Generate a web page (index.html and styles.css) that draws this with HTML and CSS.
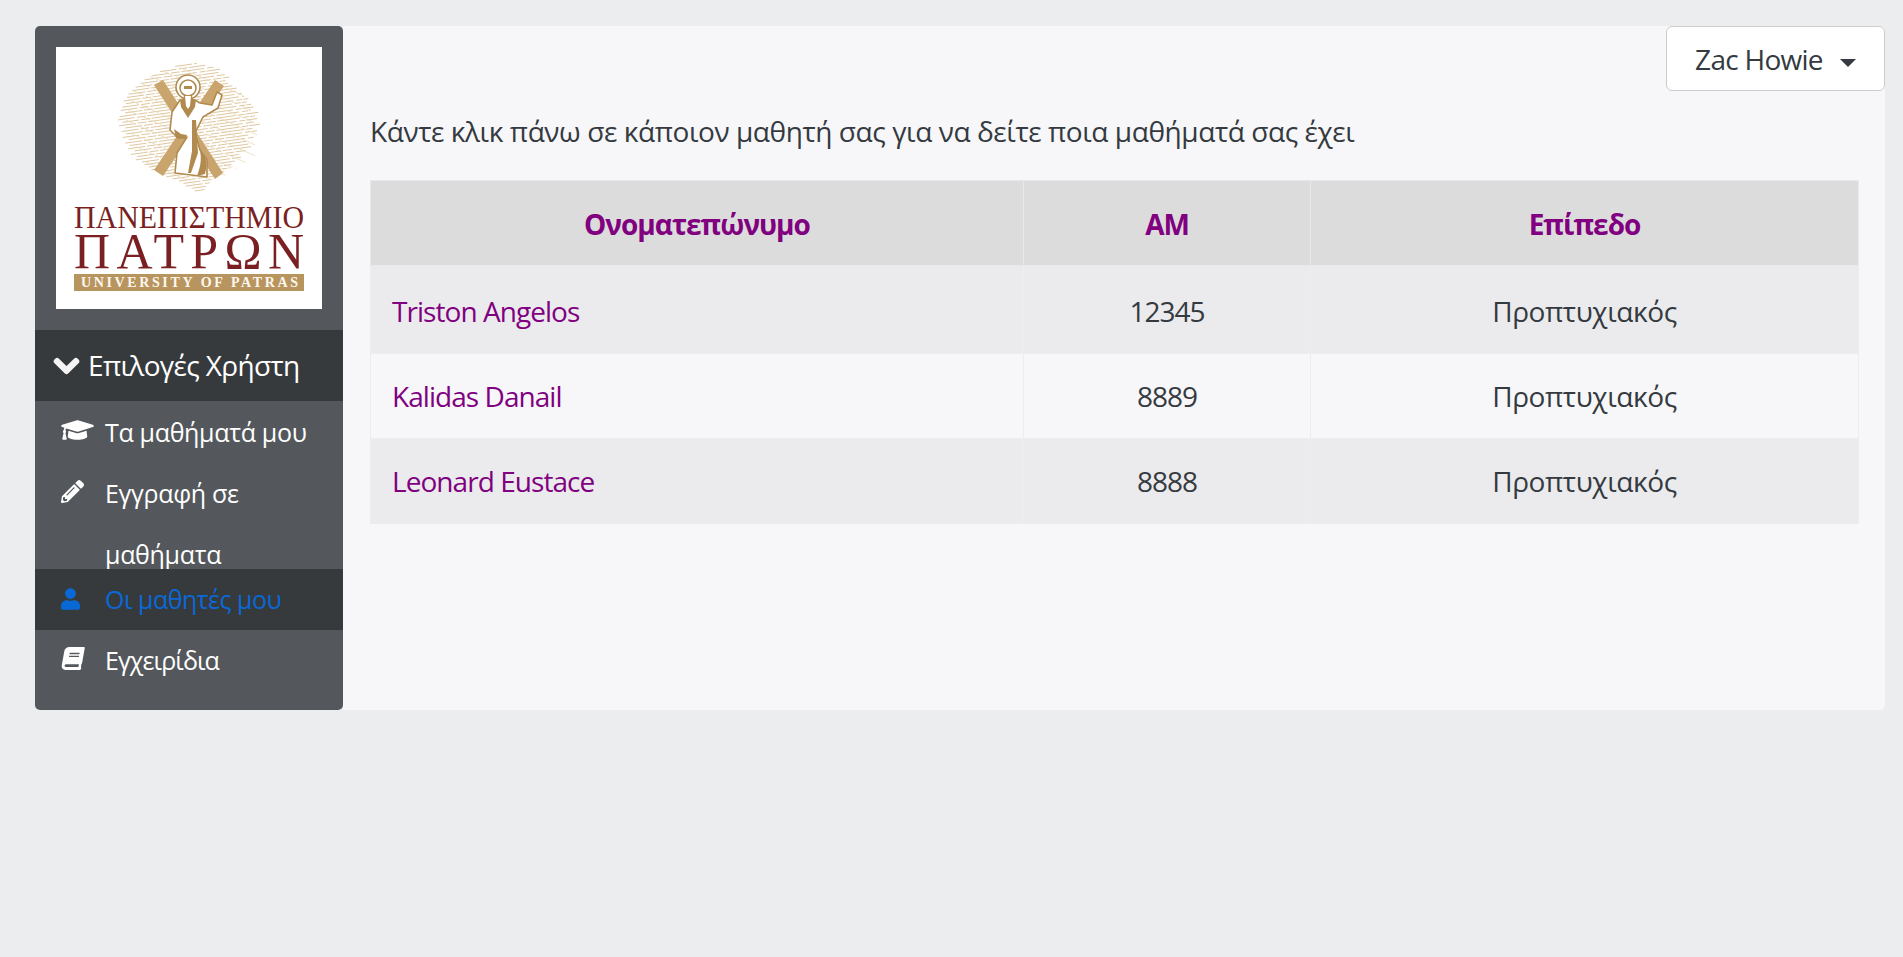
FILE: index.html
```html
<!DOCTYPE html>
<html lang="el">
  <head>
    <meta charset="utf-8">
    <title>Οι μαθητές μου</title>
    <link rel="stylesheet" href="styles.css">
  </head>
  <body>
    <div class="wrapper">
      <nav class="sidebar">
        <div class="logo-box">
          <svg class="logo" viewBox="0 0 266 262" role="img" aria-label="Πανεπιστήμιο Πατρών">
            <g class="hatch" transform="rotate(-8 134 82)">
              <path d="M128 18H150M112 21H158M104 24H166M96 27H172M92 30H170M86 33H176M82 36H180M78 39H176M76 42H178M72 45H182M74 48H186M70 51H188M68 54H190M72 57H192M66 60H196M64 63H194M68 66H198M64 69H200M70 72H196M66 75H204M70 78H200M66 81H202M72 84H198M68 87H204M72 90H196M70 93H200M76 96H192M72 99H196M78 102H188M76 105H190M82 108H192M84 111H186M88 114H180M90 117H182M96 120H174M100 123H170M104 126H168M110 129H162M116 132H156M120 135H150M122 138H146M128 141H142M130 144H140"/>
            </g>
            <g class="hatch hatch-cross" transform="rotate(24 134 82)">
              <path d="M100 30H170M86 40H182M76 50H190M70 60H198M66 70H200M66 80H204M70 90H198M72 100H192M82 110H186M92 120H174M106 130H160"/>
            </g>
            <path d="M98 38l9-5 60 93-8 6zM159 33l9 6-61 90-9-6z" fill="#c9a56d"/>
            <path class="fig-line" d="M124 53l-8 12-2 18 8 8 9-1-10 16-2 20 32 4 0-17-7-10-5-17 8-16 15-9 4-13-5-3-5 13-12-2-5-3z" fill="#fff"/>
            <circle class="fig-line" cx="132" cy="40" r="12" fill="#fff"/>
            <circle class="fig-line" cx="132" cy="41" r="8" fill="#fff" stroke-width="2.6"/>
            <path d="M124 53c2 0 3-1 4-4h8c1 3 2 4 4 4l-1 7-7 11-7-11zM128 42h8v-3h-8z" fill="#b08a4e"/>
            <path d="M129 49h6l-1 10-2 3-2-3z" fill="#fff"/>
            <path d="M136 73l4 0 2 33-7 20h-3l4-22z" fill="#b08a4e"/>
            <path d="M118 82l7 5 6 1-2 4-9-1zM144 104c6 4 8 12 5 23l-8 2c3-8 5-16 3-25z" fill="#b08a4e"/>
            <text class="logo-line1" x="18" y="181" textLength="230" lengthAdjust="spacingAndGlyphs">ΠΑΝΕΠΙΣΤΗΜΙΟ</text>
            <text class="logo-line2" x="18" y="221" textLength="230" lengthAdjust="spacing">ΠΑΤΡΩΝ</text>
            <rect x="18" y="227" width="230" height="17" fill="#b8955f"/>
            <text class="logo-line3" x="25" y="240" textLength="217" lengthAdjust="spacing">UNIVERSITY OF PATRAS</text>
          </svg>
        </div>
        <div class="side-title">
          <svg class="chevron" viewBox="0 0 448 512"><path d="M207.029 381.476L12.686 187.132c-9.373-9.373-9.373-24.569 0-33.941l22.667-22.667c9.357-9.357 24.522-9.375 33.901-.04L224 284.505l154.745-154.021c9.379-9.335 24.544-9.317 33.901.04l22.667 22.667c9.373 9.373 9.373 24.569 0 33.941L240.971 381.476c-9.373 9.372-24.569 9.372-33.942 0z"/></svg>
          <span>Επιλογές Χρήστη</span>
        </div>
        <ul class="side-menu">
          <li class="side-item">
            <span class="side-icon"><svg class="icon-cap" viewBox="0 0 640 512"><path d="M622.34 153.2L343.4 67.5c-15.2-4.67-31.6-4.67-46.79 0L17.66 153.2c-23.54 7.23-23.54 38.36 0 45.59l48.63 14.94c-10.67 13.19-17.23 29.28-17.88 46.9C38.78 266.15 32 276.11 32 288c0 10.78 5.68 19.85 13.86 25.65L20.33 428.53C18.11 438.52 25.71 448 35.94 448h56.11c10.24 0 17.84-9.48 15.62-19.47L82.14 313.65C90.32 307.85 96 298.78 96 288c0-11.57-6.47-21.25-15.66-26.87.76-15.02 8.44-28.3 20.69-36.72L296.6 284.5c9.06 2.78 26.44 6.25 46.79 0l278.95-85.7c23.55-7.24 23.55-38.36 0-45.6zM352.79 315.09c-28.53 8.76-52.84 3.92-65.59 0l-145.02-44.55L128 384c0 35.35 85.96 64 192 64s192-28.65 192-64l-14.18-113.47-145.03 44.56z"/></svg></span>
            <a href="#">Τα μαθήματά μου</a>
          </li>
          <li class="side-item side-item-wrap">
            <span class="side-icon"><svg class="icon-pencil" viewBox="0 0 512 512"><path d="M497.9 142.1l-46.1 46.1c-4.7 4.7-12.3 4.7-17 0l-111-111c-4.7-4.7-4.7-12.3 0-17l46.1-46.1c18.7-18.7 49.1-18.7 67.9 0l60.1 60.1c18.8 18.7 18.8 49.1 0 67.9zM284.2 99.8L21.6 362.4.4 483.9c-2.9 16.4 11.4 30.6 27.8 27.8l121.5-21.3 262.6-262.6c4.7-4.7 4.7-12.3 0-17l-111-111c-4.8-4.7-12.4-4.7-17.1 0zM124.1 339.9c-5.5-5.5-5.5-14.3 0-19.8l154-154c5.5-5.5 14.3-5.5 19.8 0s5.5 14.3 0 19.8l-154 154c-5.5 5.5-14.3 5.5-19.8 0zM88 424h48v36.3l-64.5 11.3-31.1-31.1L51.7 376H88v48z"/></svg></span>
            <a href="#">Εγγραφή σε μαθήματα</a>
          </li>
          <li class="side-item side-item-active">
            <span class="side-icon"><svg class="icon-user" viewBox="0 0 448 512"><path d="M224 256c70.7 0 128-57.3 128-128S294.7 0 224 0 96 57.3 96 128s57.3 128 128 128zm89.6 32h-16.7c-22.2 10.2-46.9 16-72.9 16s-50.6-5.8-72.9-16h-16.7C60.2 288 0 348.2 0 422.4V464c0 26.5 21.5 48 48 48h352c26.5 0 48-21.5 48-48v-41.6c0-74.2-60.2-134.4-134.4-134.4z"/></svg></span>
            <a class="link-mid" href="#">Οι μαθητές μου</a>
          </li>
          <li class="side-item">
            <span class="side-icon"><svg class="icon-book" viewBox="0 0 540 512"><path transform="translate(90 0) skewX(-10)" d="M448 360V24c0-13.3-10.7-24-24-24H96C43 0 0 43 0 96v320c0 53 43 96 96 96h328c13.3 0 24-10.7 24-24v-16c0-7.5-3.5-14.3-8.9-18.7-4.2-15.4-4.2-59.3 0-74.7 5.4-4.3 8.9-11.1 8.9-18.6zM128 134c0-3.3 2.7-6 6-6h212c3.3 0 6 2.7 6 6v20c0 3.3-2.7 6-6 6H134c-3.3 0-6-2.7-6-6v-20zm0 64c0-3.3 2.7-6 6-6h212c3.3 0 6 2.7 6 6v20c0 3.3-2.7 6-6 6H134c-3.3 0-6-2.7-6-6v-20zm253.4 250H96c-17.7 0-32-14.3-32-32 0-17.6 14.4-32 32-32h285.4c-1.9 17.1-1.9 46.9 0 64z"/></svg></span>
            <a class="link-tight" href="#">Εγχειρίδια</a>
          </li>
        </ul>
      </nav>
      <main class="content">
        <div class="topbar">
          <button class="user-btn" type="button">Zac Howie<span class="caret"></span></button>
        </div>
        <p class="intro">Κάντε κλικ πάνω σε κάποιον μαθητή σας για να δείτε ποια μαθήματά σας έχει</p>
        <table class="students">
          <colgroup>
            <col class="col-name">
            <col class="col-am">
            <col class="col-level">
          </colgroup>
          <thead>
            <tr>
              <th>Ονοματεπώνυμο</th>
              <th>ΑΜ</th>
              <th>Επίπεδο</th>
            </tr>
          </thead>
          <tbody>
            <tr>
              <td class="student-name"><a href="#">Triston Angelos</a></td>
              <td class="student-am">12345</td>
              <td>Προπτυχιακός</td>
            </tr>
            <tr>
              <td class="student-name"><a href="#">Kalidas Danail</a></td>
              <td class="student-am">8889</td>
              <td>Προπτυχιακός</td>
            </tr>
            <tr>
              <td class="student-name"><a href="#">Leonard Eustace</a></td>
              <td class="student-am">8888</td>
              <td>Προπτυχιακός</td>
            </tr>
          </tbody>
        </table>
      </main>
    </div>
  </body>
</html>
```

FILE: styles.css
```css
html, body {
  height: 100%;
}
body {
  margin: 0;
  background: #ecedef;
  color: #343a40;
  font: 28px/1.5 "Open Sans", "Noto Sans", sans-serif;
  letter-spacing: -0.42px;
}
a {
  color: #800080;
  text-decoration: none;
}
.wrapper {
  display: flex;
  padding: 26px 18px 0 35px;
}

/* sidebar */
.sidebar {
  flex: 0 0 308px;
  height: 684px;
  background: #54585c;
  border-radius: 5px;
  overflow: hidden;
}
.logo-box {
  padding: 21px;
}
.logo {
  display: block;
  width: 266px;
  height: 262px;
  background: #fff;
}
.logo text {
  font-family: "Liberation Serif", serif;
  letter-spacing: 0;
}
.logo-line1 {
  font-size: 31px;
  fill: #7a1f22;
}
.logo-line2 {
  font-size: 50px;
  fill: #7a1f22;
}
.logo-line3 {
  font-size: 14px;
  font-weight: bold;
  fill: #fdf8ef;
}
.hatch path {
  fill: none;
  stroke: #dcc49a;
  stroke-width: .9;
  stroke-dasharray: 17 2 9 1.5 23 3 6 1;
}
.hatch-cross path {
  stroke: #e8d8ba;
  stroke-width: .7;
  stroke-dasharray: 11 3 19 2;
}
.fig-line {
  stroke: #b08a4e;
  stroke-width: 1.6;
  stroke-linejoin: round;
}
.side-title {
  display: flex;
  align-items: center;
  height: 71px;
  padding-left: 19px;
  background: #373a3d;
  color: #fff;
  letter-spacing: -0.65px;
}
.side-title span {
  margin-top: -1px;
}
.chevron {
  width: 25px;
  height: 28px;
  margin-right: 9px;
  fill: #f5f5f5;
  stroke: #f5f5f5;
  stroke-width: 36;
  overflow: visible;
}
.side-menu {
  margin: 0;
  padding: 1px 0 0;
  list-style: none;
}
.side-item {
  display: flex;
  padding: 0 0 0 26px;
  font-size: 25px;
  letter-spacing: -0.32px;
  line-height: 61px;
  overflow: hidden;
}
.side-item a {
  color: #fff;
}
.side-item a.link-tight {
  letter-spacing: -0.9px;
}
.side-item-wrap {
  height: 106px;
}
.side-item-active {
  background: #373a3d;
}
.side-item-active a {
  color: #0869d6;
}
.side-item a.link-mid {
  color: #0869d6;
  letter-spacing: -0.5px;
}
.side-icon {
  flex: 0 0 44px;
  height: 61px;
  padding-top: 15px;
  box-sizing: border-box;
}
.side-icon svg {
  display: block;
  fill: #fff;
}
.side-item-active .side-icon svg {
  fill: #0869d6;
}
.icon-cap {
  width: 33px;
  height: 26px;
}
.icon-pencil {
  width: 23px;
  height: 23px;
  margin-top: 2px;
}
.icon-user {
  width: 19px;
  height: 22px;
  margin-top: 4px;
}
.icon-book {
  width: 24px;
  height: 23px;
  margin-top: 2px;
}

/* main area */
.content {
  flex: 1;
  height: 684px;
  padding: 0 26px 0 27px;
  background: #f7f7fa;
  border-radius: 0 5px 5px 0;
}
.topbar {
  display: flex;
  justify-content: flex-end;
  margin-right: -26px;
}
.user-btn {
  width: 219px;
  height: 65px;
  padding: 0;
  background: #fff;
  border: 1px solid #ccc;
  border-radius: 6px;
  color: #343a40;
  font: inherit;
  letter-spacing: -0.72px;
}
.caret {
  display: inline-block;
  margin-left: 17px;
  vertical-align: 3px;
  border-top: 8px solid #343a40;
  border-left: 8px solid transparent;
  border-right: 8px solid transparent;
}
.intro {
  margin: 22px 0 31px;
  line-height: 36px;
}
.students {
  width: 100%;
  table-layout: fixed;
  border-collapse: collapse;
}
.col-name {
  width: 653px;
}
.col-am {
  width: 287px;
}
.students th, .students td {
  box-sizing: border-box;
  height: 85px;
  padding: 0 21px;
  border: 1px solid #ededf1;
  text-align: center;
}
.students tbody tr:first-child td {
  height: 88px;
  padding-top: 2px;
}
.students th {
  padding-top: 1px;
  background: #dcdcdc;
  color: #800080;
  font-weight: bold;
  letter-spacing: -1px;
  border-color: #e9e9e9;
}
.students tbody tr:nth-child(odd) td {
  background: #ebebed;
}
.students td.student-name {
  text-align: left;
  letter-spacing: -0.95px;
}
.students td.student-am {
  letter-spacing: -1px;
}
```
